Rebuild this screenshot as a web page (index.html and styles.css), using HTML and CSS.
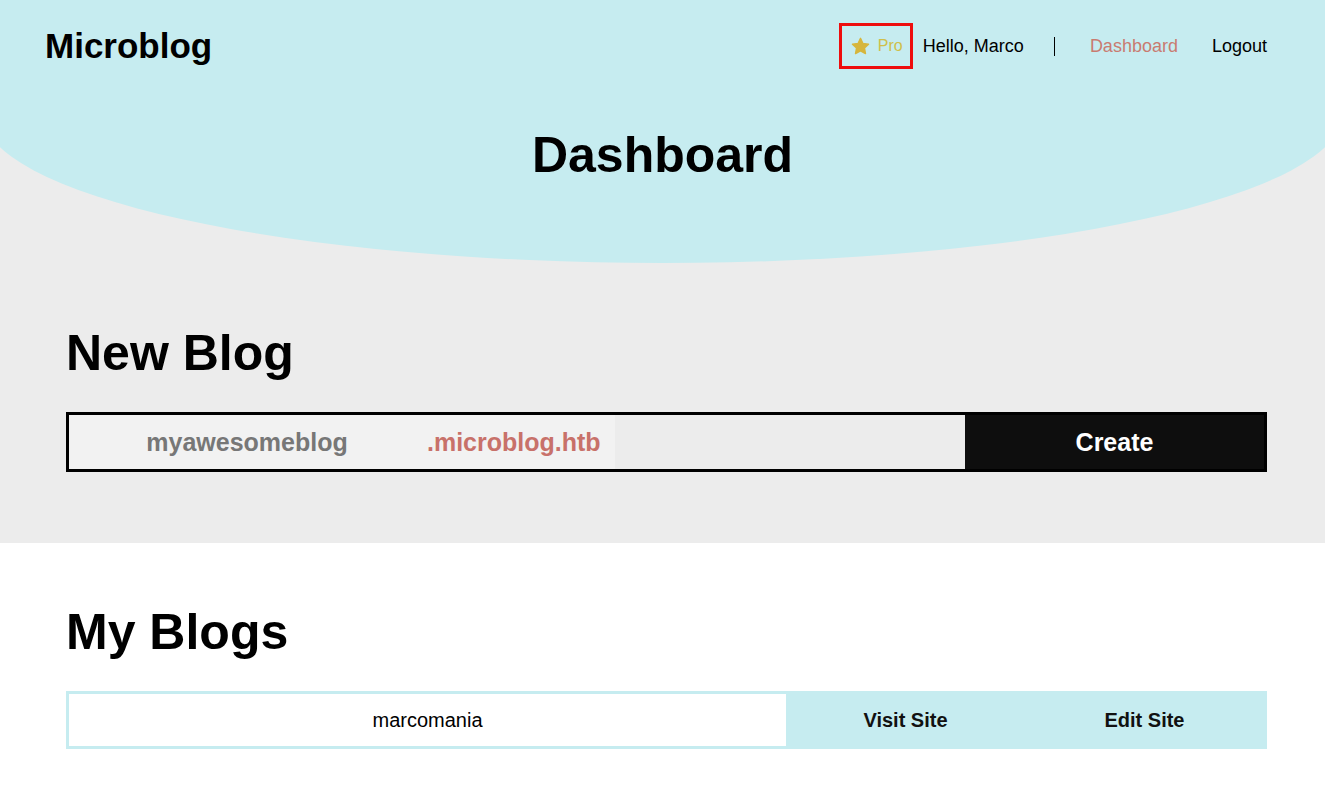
FILE: index.html
```html
<!DOCTYPE html>
<html lang="en">
<head>
<meta charset="utf-8">
<title>Dashboard - Microblog</title>
<link rel="stylesheet" href="styles.css">
</head>
<body>
<section class="top">
  <header class="hero">
    <nav class="nav">
      <a class="brand" href="#">Microblog</a>
      <ul class="menu">
        <li class="pro">
          <svg class="star" viewBox="0 0 24 24" width="21" height="21" aria-hidden="true">
            <path d="M12 2.6l2.8 5.9 6.4.8-4.7 4.4 1.2 6.4L12 17l-5.7 3.1 1.2-6.4-4.7-4.4 6.4-.8z" fill="#d6b63c" stroke="#d6b63c" stroke-width="1.6" stroke-linejoin="round"/>
          </svg>
          <span>Pro</span>
        </li>
        <li class="hello">Hello, Marco</li>
        <li class="sep" aria-hidden="true"></li>
        <li class="dash"><a class="link active" href="#">Dashboard</a></li>
        <li><a class="link" href="#">Logout</a></li>
      </ul>
    </nav>
    <h1 class="title">Dashboard</h1>
  </header>
  <div class="container">
    <h2 class="heading">New Blog</h2>
    <form class="new-blog">
      <input class="subdomain" type="text" placeholder="myawesomeblog">
      <span class="domain">.microblog.htb</span>
      <span class="filler"></span>
      <button class="create" type="button">Create</button>
    </form>
  </div>
</section>
<section class="blogs">
  <div class="container">
    <h2 class="heading">My Blogs</h2>
    <table class="blog-table">
      <tr>
        <td class="name">marcomania</td>
        <td class="action"><a href="#">Visit Site</a></td>
        <td class="action"><a href="#">Edit Site</a></td>
      </tr>
    </table>
  </div>
</section>
</body>
</html>
```
FILE: styles.css
```css
* { box-sizing: border-box; }

html, body {
  margin: 0;
  padding: 0;
}

body {
  font-family: "Liberation Sans", Arial, sans-serif;
  color: #000;
  background: #fff;
  overflow-x: hidden;
}

a { color: inherit; text-decoration: none; }

.top {
  background: #ececec;
  padding-bottom: 71px;
  overflow: hidden;
}

.hero {
  background: #c6ecf0;
  margin: 0 -18px;
  padding: 0 18px;
  height: 263px;
  border-radius: 0 0 680px 680px / 0 0 150px 150px;
}

.nav {
  height: 92px;
  display: flex;
  align-items: center;
  justify-content: space-between;
  padding: 0 58px 0 45px;
}

.brand {
  font-size: 35px;
  font-weight: bold;
  line-height: 1;
  margin-top: -2px;
}

.menu {
  list-style: none;
  margin: 0;
  padding: 0;
  display: flex;
  align-items: center;
  font-size: 18px;
}

.pro {
  display: flex;
  align-items: center;
  height: 46px;
  width: 74px;
  border: 3px solid #ee0d0d;
  padding-left: 8px;
  color: #cfbf4a;
  font-size: 16px;
  margin-right: 10px;
}

.star {
  display: block;
  margin-right: 7px;
  flex: none;
}

.hello {
  margin-right: 30px;
}

.sep {
  width: 1px;
  height: 19px;
  background: #000;
  margin-right: 35px;
}

.dash {
  margin-right: 34px;
}

.link.active {
  color: #c97b70;
}

.title {
  margin: 38px 0 0;
  text-align: center;
  font-size: 50px;
  line-height: 1;
  font-weight: bold;
}

.container {
  padding: 0 58px 0 66px;
}

.heading {
  font-size: 50px;
  line-height: 1;
  font-weight: bold;
  margin: 65px 0 34px 0;
}

.new-blog {
  display: flex;
  height: 60px;
  border: 3px solid #000;
  background: #ececec;
  margin: 0;
}

.subdomain {
  width: 356px;
  border: none;
  outline: none;
  background: #f2f2f2;
  font-family: inherit;
  font-size: 25px;
  font-weight: bold;
  text-align: center;
  color: #777;
  padding: 0;
}

.subdomain::placeholder {
  color: #777;
  opacity: 1;
}

.domain {
  display: flex;
  align-items: center;
  width: 190px;
  padding-left: 2px;
  background: #f2f2f2;
  color: #c8716a;
  font-size: 25px;
  font-weight: bold;
}

.filler {
  flex: 1;
}

.create {
  width: 299px;
  border: none;
  background: #0e0e0e;
  color: #fff;
  font-family: inherit;
  font-size: 25px;
  font-weight: bold;
  cursor: pointer;
  padding: 0;
}

.blogs .heading {
  margin-top: 64px;
}

.blog-table {
  width: 100%;
  border-collapse: separate;
  border-spacing: 0;
  border: 3px solid #c6ecf0;
}

.blog-table td {
  height: 52px;
  padding: 0;
  text-align: center;
}

.name {
  width: 717px;
  font-size: 20px;
  background: #fff;
}

.action {
  width: 239px;
  background: #c6ecf0;
  font-size: 20px;
  font-weight: bold;
  color: #111;
}
```
